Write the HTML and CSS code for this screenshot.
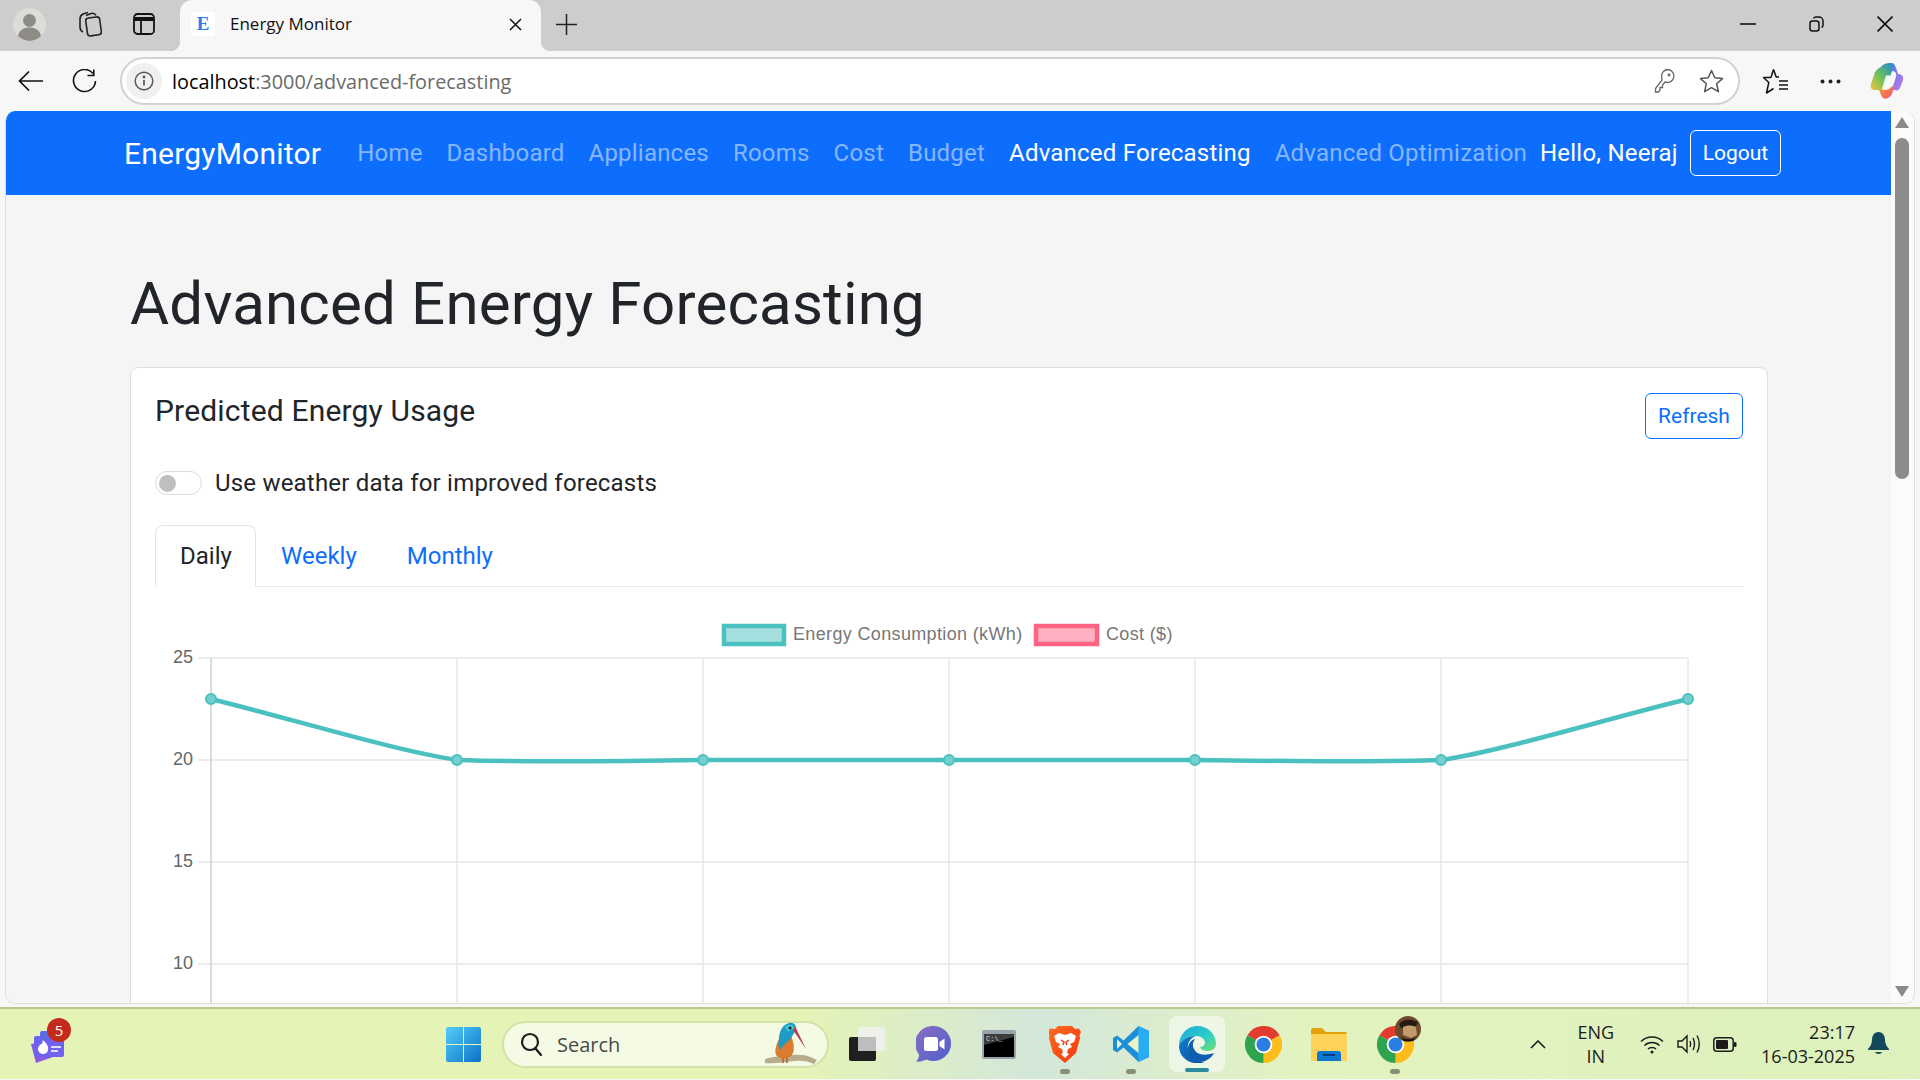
FILE: index.html
```html
<!DOCTYPE html>
<html lang="en">
<head>
<meta charset="utf-8">
<title>Energy Monitor</title>
<link rel="stylesheet" href="styles.css">
</head>
<body>
<svg class="defs" width="0" height="0" aria-hidden="true">
  <symbol id="chrome" viewBox="0 0 36 36">
    <path d="M18 18 L2.4 9 A18 18 0 0 1 33.6 9 Z" fill="#e33b2e"/>
    <path d="M18 18 L33.6 9 A18 18 0 0 1 18 36 Z" fill="#fbbc1c"/>
    <path d="M18 18 L18 36 A18 18 0 0 1 2.4 9 Z" fill="#2fa44f"/>
    <circle cx="18" cy="18" r="8.6" fill="#fff"/>
    <circle cx="18" cy="18" r="6.8" fill="#2a7de1"/>
  </symbol>
</svg>
<div class="window">
  <div class="tabstrip">
    <svg class="ic-profile" width="33" height="33" viewBox="0 0 33 33"><circle cx="16.5" cy="16.5" r="16.5" fill="#dcdcd8"/><circle cx="16.5" cy="12.5" r="6.5" fill="#8f8c88"/><path d="M5 28c1-6 6-8.500 11.500-8.500S27 22 28 28a16 16 0 0 1-23 0z" fill="#8f8c88"/></svg>
    <svg class="ic-coll" width="25" height="26" viewBox="0 0 25 26" fill="none" stroke="#222" stroke-width="1.6"><rect x="9.500" y="6.500" width="14" height="18" rx="3" transform="rotate(-8 16 15)"/><path d="M6 21c-2-1-3-3-3-5V8c0-2 1-4 3-5l5-1.500"/><path d="M9 4.500l5-2c2-.5 4 0 5 2"/></svg>
    <svg class="ic-tabs" width="22" height="22" viewBox="0 0 22 22" fill="none" stroke="#111" stroke-width="1.8"><rect x="1" y="1" width="20" height="20" rx="3.500"/><path d="M1 6h20" stroke-width="4"/><path d="M8 7v14"/></svg>
    <div class="tab">
      <span class="favicon">E</span>
      <span class="tab-title">Energy Monitor</span>
      <svg class="ic-tabclose" width="13" height="13" viewBox="0 0 13 13" stroke="#111" stroke-width="1.5"><path d="M1 1l11 11M12 1L1 12"/></svg>
    </div>
    <svg class="ic-plus" width="21" height="21" viewBox="0 0 21 21" stroke="#222" stroke-width="1.500"><path d="M10.500 0v21M0 10.500h21"/></svg>
    <div class="winctl">
      <svg width="16" height="16" viewBox="0 0 16 16" stroke="#111" stroke-width="1.600"><path d="M0 8h16"/></svg>
      <svg width="15" height="16" viewBox="0 0 15 16" fill="none" stroke="#111" stroke-width="1.500"><rect x="1" y="5" width="9" height="10" rx="2.500"/><path d="M4.500 2.500C5 1.500 6 1 7 1h3c2.200 0 4 1.800 4 4v4c0 1-.5 2-1.300 2.500"/></svg>
      <svg width="16" height="16" viewBox="0 0 16 16" stroke="#111" stroke-width="1.600"><path d="M.5.500l15 15M15.500.500l-15 15"/></svg>
    </div>
  </div>

  <div class="toolbar">
    <svg class="ic-back" width="25" height="22" viewBox="0 0 25 22" fill="none" stroke="#111" stroke-width="1.700"><path d="M25 11H1.500M11 1.500L1.500 11l9.500 9.500"/></svg>
    <svg class="ic-reload" width="25" height="25" viewBox="0 0 25 25" fill="none" stroke="#111" stroke-width="1.600"><path d="M21 4.500A11 11 0 1 0 23.500 12"/><path d="M21.800 .5v6h-6.300"/></svg>
    <div class="address">
      <span class="info"><svg width="20" height="20" viewBox="0 0 20 20" fill="none" stroke="#555" stroke-width="1.400"><circle cx="10" cy="10" r="8.800"/><path d="M10 9v5.500" stroke-width="1.700"/><circle cx="10" cy="6" r=".7"/></svg></span>
      <span class="url"><span class="url-host">localhost</span>:3000/advanced-forecasting</span>
      <svg class="ic-key" width="21" height="26" viewBox="0 0 21 26" fill="none" stroke="#666" stroke-width="1.300"><path d="M13.500 1.500a6.500 6.500 0 0 1 1 12.900c-1.200.2-2.300 0-3.300-.5L8.500 17v2.500H6V22l-1.500 2H1.500v-3.500L8.200 12c-.4-1-.7-2-.5-3.200A6.500 6.500 0 0 1 13.500 1.500z"/><circle cx="15" cy="7" r=".8" fill="#666"/></svg>
      <svg class="ic-star" width="25" height="25" viewBox="0 0 25 25" fill="none" stroke="#555" stroke-width="1.500" stroke-linejoin="round"><path d="M12.500 1.500l3.300 7.300 7.700.8-5.800 5.200 1.700 7.900-6.900-4.100-6.900 4.100 1.700-7.900L1.500 9.600l7.700-.8z"/></svg>
    </div>
    <svg class="ic-favs" width="26" height="27" viewBox="0 0 26 27" fill="none" stroke="#111" stroke-width="1.500" stroke-linejoin="round"><path d="M11.500 1.500L14.200 9H17M9 9.500H1.500l5.300 5L4.500 25l7-4.500"/><path d="M11.500 1.500L9 9.500"/><path d="M17 13h9M17 17h9M17 21h9"/></svg>
    <svg class="ic-more" width="21" height="5" viewBox="0 0 21 5" fill="#222"><circle cx="2.500" cy="2.500" r="2"/><circle cx="10.500" cy="2.500" r="2"/><circle cx="18.500" cy="2.500" r="2"/></svg>
    <svg class="ic-copilot" width="34" height="36" viewBox="0 0 34 36">
      <defs>
        <linearGradient id="cpA" x1="0" y1="1" x2="1" y2="0"><stop offset="0" stop-color="#f5c23a"/><stop offset=".45" stop-color="#6fc35a"/><stop offset="1" stop-color="#1d86d8"/></linearGradient>
        <linearGradient id="cpB" x1="0" y1="0" x2="1" y2="1"><stop offset="0" stop-color="#3f7be8"/><stop offset="1" stop-color="#c77ae8"/></linearGradient>
        <linearGradient id="cpC" x1="0" y1="0" x2="1" y2="1"><stop offset="0" stop-color="#f8a13b"/><stop offset="1" stop-color="#ee4f6e"/></linearGradient>
      </defs>
      <path d="M11 4C13 1 16 0 21 0c3 0 3 3 2 6l-7 18c-1 2-3 3-5 3H5c-4 0-5-3-4-6l3-9c1-4 3-6 7-8z" fill="url(#cpA)"/>
      <path d="M21 0c3 0 4 2 5 5l2 6c3 0 6 2 5 6l-3 8c-1 2-3 3-5 2h-7c2 0 4-2 5-4l3-9c1-4-1-6-4-6 1-4 1-7-1-8z" fill="url(#cpB)"/>
      <path d="M9 27h6c2 0 5-1 6-3l2-1c1 6-2 11-5 12-3 2-6 0-7-3z" fill="url(#cpC)"/>
      <path d="M16 12.500h5.500L17 26h-5z" fill="#fff" fill-opacity=".92"/>
    </svg>
  </div>

  <div class="viewport">
    <div class="page">
      <nav class="navbar">
        <a class="brand">EnergyMonitor</a>
        <a class="nav-link">Home</a>
        <a class="nav-link">Dashboard</a>
        <a class="nav-link">Appliances</a>
        <a class="nav-link">Rooms</a>
        <a class="nav-link">Cost</a>
        <a class="nav-link">Budget</a>
        <a class="nav-link active">Advanced Forecasting</a>
        <a class="nav-link">Advanced Optimization</a>
        <span class="hello">Hello, Neeraj</span>
        <button class="btn btn-light">Logout</button>
      </nav>
      <main class="main">
        <h1 class="title">Advanced Energy Forecasting</h1>
        <section class="card">
          <div class="card-head">
            <h2 class="card-title">Predicted Energy Usage</h2>
            <button class="btn btn-primary-outline">Refresh</button>
          </div>
          <label class="switch-row">
            <span class="switch"><span class="knob"></span></span>
            <span>Use weather data for improved forecasts</span>
          </label>
          <div class="tabs">
            <a class="tablink current">Daily</a>
            <a class="tablink">Weekly</a>
            <a class="tablink">Monthly</a>
          </div>
          <svg class="chart" width="1588" height="420" viewBox="155 587 1588 420">
            <g class="grid">
              <path d="M198 658H1688M198 760H1688M198 862H1688M198 964H1688"/>
              <path d="M457 658V1007M703 658V1007M949 658V1007M1195 658V1007M1441 658V1007M1688 658V1007"/>
            </g>
            <path class="axis" d="M211 658V1007"/>
            <g class="ticks">
              <text x="193" y="663">25</text>
              <text x="193" y="765">20</text>
              <text x="193" y="867">15</text>
              <text x="193" y="969">10</text>
            </g>
            <rect class="teal-box" x="724" y="626" width="60" height="18"/>
            <text class="legend" x="793" y="639.500">Energy Consumption (kWh)</text>
            <rect class="pink-box" x="1036" y="626" width="61" height="18"/>
            <text class="legend" x="1106" y="639.500">Cost ($)</text>
            <path class="line" d="M211 699C292 719 400 752 457 760C520 762 640 761 703 760L1195 760C1258 761 1388 762 1441 760C1498 752 1606 719 1688 699"/>
            <g class="dots">
              <circle cx="211" cy="699" r="5"/><circle cx="457" cy="760" r="5"/><circle cx="703" cy="760" r="5"/><circle cx="949" cy="760" r="5"/><circle cx="1195" cy="760" r="5"/><circle cx="1441" cy="760" r="5"/><circle cx="1688" cy="699" r="5"/>
            </g>
          </svg>
        </section>
      </main>
    </div>
    <div class="scrollbar">
      <span class="arrow-up"></span>
      <span class="thumb"></span>
      <span class="arrow-down"></span>
    </div>
  </div>

  <footer class="taskbar">
    <div class="widget">
      <svg width="36" height="34" viewBox="0 0 36 34"><path d="M1 14l22-4v17L6 33z" fill="#8a5ae0"/><rect x="4" y="6" width="30" height="21" rx="2" fill="#6f62ee"/><rect x="10" y="1" width="20" height="8" rx="2" fill="#5a6ce8"/><path d="M13 10c3 3 6 6 5 10-.5 3-3 4-5 4s-5-2-5-5c0-3 2-3 2-5 1 1 2 1 3-4z" fill="#fff"/><path d="M21 17h10M21 21h7" stroke="#e4dcff" stroke-width="2"/></svg>
      <span class="badge">5</span>
    </div>
    <div class="taskicon start">
      <svg width="35" height="35" viewBox="0 0 35 35"><defs><linearGradient id="wn" x1="0" y1="0" x2="1" y2="1"><stop offset="0" stop-color="#56cdf8"/><stop offset="1" stop-color="#0a72c9"/></linearGradient></defs><path d="M2 0h15v17H0V2a2 2 0 0 1 2-2zM18 0h15a2 2 0 0 1 2 2v15H18zM0 18h17v17H2a2 2 0 0 1-2-2zM18 18h17v15a2 2 0 0 1-2 2H18z" fill="url(#wn)"/></svg>
    </div>
    <div class="searchbox">
      <svg width="23" height="25" viewBox="0 0 23 25" fill="none" stroke="#1b1b1b" stroke-width="2.200"><circle cx="10" cy="10" r="8"/><path d="M15.500 16.500L21 23" stroke-linecap="round"/></svg>
      <span class="search-label">Search</span>
      <svg class="bird" width="56" height="46" viewBox="0 0 56 46">
        <path d="M2 38c10-3 18-3 28-4 8-1 16 0 24 5l-3 4c-6-3-12-4-20-3-10 1-20 3-29 2z" fill="#b5ad8c"/>
        <path d="M17 16c-3 6-6 12-4 18 3 4 12 5 16 0 3-5 2-12-1-19z" fill="#dc7a2f"/>
        <path d="M16 18c0-7 3-14 10-16 5-1 8 3 7 7l-5 8c-3 4-7 6-11 12-2-4-2-7-1-11z" fill="#1f9cc4"/>
        <path d="M22 6c3-3 8-3 10 1-2 1-5 2-7 4z" fill="#38c6d8"/>
        <path d="M32 5l11 23-13-19z" fill="#b0485a"/>
        <circle cx="27" cy="7" r="1.500" fill="#122"/>
        <path d="M20 37v5M24 37v5" stroke="#c2562a" stroke-width="1.500"/>
      </svg>
    </div>
    <div class="taskicon">
      <svg width="36" height="34" viewBox="0 0 36 34"><rect x="0" y="10" width="27" height="24" rx="2" fill="#1f1f1f"/><rect x="9" y="0" width="27" height="24" rx="2" fill="#f2f2f2" fill-opacity=".82"/><rect x="9" y="10" width="18" height="14" fill="#bdbdbd"/></svg>
    </div>
    <div class="taskicon">
      <svg width="35" height="36" viewBox="0 0 35 36"><defs><linearGradient id="mt" x1="0" y1="0" x2="1" y2="1"><stop offset="0" stop-color="#8a6fc2"/><stop offset="1" stop-color="#4f5fcb"/></linearGradient></defs><path d="M17.500 0a17.500 17.500 0 1 1-7 33.500C7 35 4 36 0 35.500c2-2 3-4 3-7A17.500 17.500 0 0 1 17.500 0z" fill="url(#mt)"/><rect x="8" y="11" width="14" height="14" rx="2.500" fill="#fff"/><path d="M23.500 16l5-3.500v11l-5-3.500z" fill="#fff"/></svg>
    </div>
    <div class="taskicon">
      <svg width="34" height="29" viewBox="0 0 34 29"><rect width="34" height="29" rx="2" fill="#9aa3ab"/><rect x="2" y="4" width="30" height="23" fill="#000"/><path d="M2 4h30v3L2 15z" fill="#3c3c3c"/><text class="term" x="4" y="11">C:\_</text></svg>
    </div>
    <div class="taskicon">
      <svg width="32" height="37" viewBox="0 0 32 37"><defs><linearGradient id="br" x1="0" y1="0" x2="1" y2="1"><stop offset="0" stop-color="#ff6a1f"/><stop offset="1" stop-color="#f2390f"/></linearGradient></defs><path d="M9 0h14l3 3 4-.5 2 3.500-1.500 3 .5 3-4 15L16 37 4 27 0 12l.5-3L-1 6l2-3.500L6 3z" fill="url(#br)"/><path d="M5 10l5-3 6 2 6-2 5 3-2 6-4 2 2 3-4 2-1 4h-4l-1-4-4-2 2-3-4-2z" fill="#fff"/><path d="M12 14l3 2-1 3M20 14l-3 2 1 3" fill="none" stroke="#f2390f" stroke-width="1.500"/><path d="M12 28l4-2 4 2-4 4z" fill="#fff"/></svg>
      <span class="run-dot"></span>
    </div>
    <div class="taskicon">
      <svg width="36" height="36" viewBox="0 0 36 36"><path d="M25.500 0L36 5v26l-10.500 5-15-14.500L4 26.500 0 24V12l4-2.500 6.500 5z" fill="#1d8fd8"/><path d="M25.500 0L36 5v26l-10.500 5z" fill="#28adf2"/><path d="M25.500 9L14.500 18l11 9z" fill="#e6f3c8"/><path d="M4 13l5 5-5 5z" fill="#e6f3c8"/></svg>
      <span class="run-dot"></span>
    </div>
    <div class="taskicon edge-on">
      <svg width="37" height="37" viewBox="0 0 37 37"><defs><linearGradient id="ed1" x1="0" y1="0" x2="1" y2="1"><stop offset="0" stop-color="#1aa6de"/><stop offset=".6" stop-color="#2fd0c4"/><stop offset="1" stop-color="#76e06a"/></linearGradient><linearGradient id="ed2" x1="0" y1="0" x2="1" y2="1"><stop offset="0" stop-color="#0f7fcf"/><stop offset="1" stop-color="#0b4f9c"/></linearGradient></defs><path d="M18.500 0C29 0 37 8 37 18c0 4-3 7-8 7-4 0-7-1-8-4 3 0 5-2 5-4 0-4-4-7-9-7C9 10 2 14 0 20 0 9 8 0 18.500 0z" fill="url(#ed1)"/><path d="M0 20c2-6 9-10 17-10-6 2-9 7-8 13 1 6 6 11 13 13 2 .5 3 .5 4 .5C13 40 0 33 0 20z" fill="url(#ed2)"/><path d="M17 36c-5-3-8-8-8-13 0-5 3-9 7-10-2 3-3 6-1 10 3 6 10 7 20 4-3 6-10 10-18 9z" fill="#0d60ad"/></svg>
      <span class="active-bar"></span>
    </div>
    <div class="taskicon">
      <svg width="37" height="37"><use href="#chrome"/></svg>
    </div>
    <div class="taskicon">
      <svg width="36" height="33" viewBox="0 0 36 33"><path d="M0 2a2 2 0 0 1 2-2h9l4 4h19a2 2 0 0 1 2 2v4H0z" fill="#e0a50c"/><path d="M0 6h36v27H0z" fill="#fdd35c"/><path d="M6 33v-7a3 3 0 0 1 3-3h18a3 3 0 0 1 3 3v7z" fill="#0d78d0"/><rect x="12" y="26" width="12" height="2" fill="#083c7a"/></svg>
    </div>
    <div class="taskicon">
      <span class="chrome-avatar">
        <svg width="37" height="37"><use href="#chrome"/></svg>
        <svg class="avatar" width="26" height="26" viewBox="0 0 26 26"><circle cx="13" cy="13" r="13" fill="#6b4a2c"/><path d="M4 8c4-5 14-6 19-1l-3 4-14 1z" fill="#241a12"/><path d="M8 11c4-2 9-2 13 0l1 8-6 3-8-3z" fill="#c29a6c"/><path d="M6 21c5 3 11 3 15 0l-3 4H9z" fill="#19130e"/></svg>
      </span>
      <span class="run-dot"></span>
    </div>
    <div class="tray">
      <svg class="ic-caret" width="16" height="9" viewBox="0 0 16 9" fill="none" stroke="#1c1c1c" stroke-width="1.600"><path d="M1 8l7-7 7 7"/></svg>
      <div class="lang"><span>ENG</span><span>IN</span></div>
      <svg class="ic-wifi" width="24" height="19" viewBox="0 0 24 19" fill="none" stroke="#1c1c1c" stroke-width="1.500"><path d="M1 6.500c6-6 16-6 22 0M4.500 10.500c4-4 11-4 15 0M8 14c2-2 6-2 8 0"/><circle cx="12" cy="17" r="1.500" fill="#1c1c1c" stroke="none"/></svg>
      <svg class="ic-vol" width="24" height="20" viewBox="0 0 24 20" fill="none" stroke="#1c1c1c" stroke-width="1.400"><path d="M1 7h4l5-5v16l-5-5H1z"/><path d="M13 7c1 2 1 4 0 6M16 4c2 4 2 8 0 12M20 1.500c3 5 3 12 0 17"/></svg>
      <svg class="ic-batt" width="24" height="15" viewBox="0 0 24 15"><rect x=".8" y=".8" width="19.400" height="13.400" rx="3" fill="none" stroke="#1c1c1c" stroke-width="1.500"/><rect x="3" y="3" width="12" height="9" rx="1" fill="#1c1c1c"/><rect x="21" y="5" width="2.500" height="5" rx="1" fill="#1c1c1c"/></svg>
      <div class="clock"><span>23:17</span><span>16-03-2025</span></div>
      <svg class="ic-bell" width="21" height="24" viewBox="0 0 21 24" fill="#14495c"><path d="M10.500 0C15 0 17 4 17 8c0 4 2 7 4 9v1H0v-1c2-2 4-5 4-9 0-4 2-8 6.500-8z"/><path d="M7 20h7c-.5 2.500-6.500 2.500-7 0z"/></svg>
    </div>
  </footer>
</div>
</body>
</html>
```

FILE: styles.css
```css
* { box-sizing: border-box; }
html, body { margin: 0; padding: 0; }
body { width: 1920px; height: 1080px; overflow: hidden; font-family: Roboto, "Liberation Sans", sans-serif; }
.defs { position: absolute; }
.window { display: flex; flex-direction: column; width: 1920px; height: 1080px; background: #f7f7f7; }

/* tab strip */
.tabstrip { display: flex; align-items: center; height: 51px; padding: 0 0 3px 13px; background: #cdcdcd; flex: none; }
.ic-profile { flex: none; }
.ic-coll { margin-left: 31px; }
.ic-tabs { margin-left: 31px; }
.tab { position: relative; display: flex; align-items: center; align-self: stretch; width: 361px; height: 51px; margin-left: 25px; padding: 0 19px 3px 11px; background: #f7f7f7; border-radius: 12px 12px 0 0; }
.tab::before, .tab::after { content: ""; position: absolute; bottom: 0; width: 10px; height: 10px; }
.tab::before { left: -10px; background: radial-gradient(circle at 0 0, transparent 10px, #f7f7f7 10.500px); }
.tab::after { right: -10px; background: radial-gradient(circle at 100% 0, transparent 10px, #f7f7f7 10.500px); }
.favicon { display: flex; align-items: center; justify-content: center; width: 24px; height: 24px; background: #fff; border-radius: 3px; color: #2f7be8; font: 700 19px "Liberation Serif", serif; }
.tab-title { margin-left: 15px; margin-bottom: 2px; font: 17px "Open Sans", "Noto Sans", sans-serif; color: #111; }
.ic-tabclose { margin-left: auto; }
.ic-plus { margin-left: 15px; }
.winctl { display: flex; align-items: center; margin-left: auto; padding-right: 27px; }
.winctl svg + svg { margin-left: 53px; }

/* toolbar */
.toolbar { display: flex; align-items: center; height: 60px; padding: 0 0 0 18px; background: #f7f7f7; flex: none; }
.ic-reload { margin-left: 29px; }
.address { display: flex; align-items: center; width: 1620px; height: 48px; margin-left: 23px; padding: 0 14px 0 4px; background: #fff; border: 2px solid #d2d2d2; border-radius: 24px; }
.info { display: flex; align-items: center; justify-content: center; width: 36px; height: 36px; border-radius: 50%; background: #f0f0f0; flex: none; }
.url { margin-left: 10px; font: 19.850px "Open Sans", "Noto Sans", sans-serif; color: #6a6a6a; }
.url-host { color: #000; }
.ic-key { margin-left: auto; }
.ic-star { margin-left: 24px; }
.ic-favs { margin-left: 22px; }
.ic-more { margin-left: 32px; }
.ic-copilot { margin-left: 29px; }

/* viewport */
.viewport { display: flex; height: 893px; margin: 0 5px 3px; background: #f5f5f5; border: 1px solid #dedede; border-top: 0; border-radius: 10px; overflow: hidden; flex: none; }
.page { flex: 1; min-width: 0; overflow: hidden; background: #f5f5f5; }
.scrollbar { position: relative; width: 23px; background: #fbfbfb; flex: none; }
.arrow-up, .arrow-down { position: absolute; left: 4px; width: 0; height: 0; border-left: 7.500px solid transparent; border-right: 7.500px solid transparent; }
.arrow-up { top: 6px; border-bottom: 11px solid #8a8a8a; }
.arrow-down { bottom: 6px; border-top: 11px solid #8a8a8a; }
.thumb { position: absolute; top: 27px; left: 4px; width: 14px; height: 341px; border-radius: 7px; background: #8c8c8c; }

/* navbar */
.navbar { display: flex; align-items: center; height: 84px; padding-left: 118px; background: #0d6efd; font-size: 24px; letter-spacing: .21px; }
.brand { margin-right: 24px; color: #fff; font-size: 30px; }
.nav-link { padding: 0 12px; color: rgba(255, 255, 255, .5); white-space: nowrap; }
.nav-link.active { color: #fff; }
.hello { margin-left: 1px; color: #fff; white-space: nowrap; }
.btn { height: 46px; padding: 0 12px; font: 21px Roboto, sans-serif; background: transparent; border-radius: 6px; }
.btn-light { margin-left: 12px; width: 91px; border: 1px solid #fff; color: #fff; }
.btn-primary-outline { width: 98px; border: 1px solid #0d6efd; color: #0d6efd; background: #fff; }

/* main */
.main { height: 808px; padding: 73px 123px 0 124px; overflow: hidden; color: #212529; }
.title { margin: 0 0 27px; font-size: 60px; line-height: 72px; font-weight: 400; letter-spacing: .2px; }
.card { height: 700px; padding: 25px 24px 0 24px; background: #fff; border: 1px solid #dfdfdf; border-radius: 8px; }
.card-head { display: flex; align-items: flex-start; justify-content: space-between; }
.card-title { margin: 0; font-size: 30px; line-height: 36px; font-weight: 400; letter-spacing: .17px; }
.switch-row { display: flex; align-items: center; gap: 13px; margin-top: 26px; font-size: 24px; line-height: 36px; letter-spacing: .2px; }
.switch { display: block; width: 47px; height: 24px; padding: 3px 2px; border: 1px solid #dcdcdc; border-radius: 12px; background: #fff; }
.knob { display: block; width: 17px; height: 17px; margin-left: 1px; border-radius: 50%; background: #bfbfbf; }
.tabs { display: flex; height: 62px; margin-top: 24px; border-bottom: 1px solid #e9e9e9; font-size: 24px; line-height: 36px; }
.tablink { height: 62px; padding: 12px 24px; color: #0d6efd; border: 1px solid transparent; }
.tablink.current { width: 101px; padding-left: 24px; color: #212529; background: #fff; border-color: #e4e4e4 #e4e4e4 #fff; border-radius: 8px 8px 0 0; }
.chart { display: block; }

/* chart */
.grid path { fill: none; stroke: #e8e8e8; stroke-width: 1.500; }
.axis { fill: none; stroke: #cfcfcf; stroke-width: 1.500; }
.ticks text { font: 18px "Liberation Sans", sans-serif; fill: #666; text-anchor: end; }
.legend { font: 18px "Liberation Sans", sans-serif; fill: #777; letter-spacing: .35px; }
.teal-box { fill: rgba(75, 192, 192, .5); stroke: #4bc0c0; stroke-width: 4.500; }
.pink-box { fill: rgba(255, 99, 132, .5); stroke: #ff6384; stroke-width: 4.500; }
.line { fill: none; stroke: #4bc0c0; stroke-width: 4.500; }
.dots circle { fill: #76cfcf; stroke: #4bc0c0; stroke-width: 2; }
.term { font: 7px "Liberation Mono", monospace; fill: #ddd; }

/* taskbar */
.taskbar { display: flex; align-items: center; height: 72px; border-top: 2px solid #b8c98f; background: linear-gradient(90deg, #e5f4b6 0%, #e4f3b6 42%, #d3e7da 54%, #e3f3c0 68%, #dcf1bb 100%); flex: none; }
.widget { position: relative; display: flex; width: 430px; padding: 6px 0 0 30px; }
.badge { position: absolute; left: 47px; top: -6px; display: flex; align-items: center; justify-content: center; width: 24px; height: 24px; border-radius: 50%; background: #c42b1c; color: #fff; font: 15px "Open Sans", sans-serif; }
.taskicon { position: relative; display: flex; align-items: center; justify-content: center; width: 66px; height: 56px; }
.taskicon.start { margin-right: 6px; }
.searchbox { display: flex; align-items: center; width: 327px; height: 47px; margin-right: 5px; padding: 0 8px 0 16px; background: #f5fae4; border: 2px solid #d4e2a8; border-radius: 24px; }
.search-label { margin-left: 14px; color: #4a4a4a; font: 20px "Open Sans", sans-serif; }
.bird { margin-left: auto; }
.run-dot { position: absolute; left: 28px; bottom: -2px; width: 10px; height: 5px; border-radius: 3px; background: #8a8f74; }
.edge-on::before { content: ""; position: absolute; left: 5px; top: 0; width: 56px; height: 56px; border-radius: 8px; background: rgba(255, 255, 255, .5); }
.edge-on svg { position: relative; }
.active-bar { position: absolute; left: 21px; bottom: 0; width: 24px; height: 4px; border-radius: 2px; background: #2b8a9e; }
.chrome-avatar { position: relative; display: flex; }
.avatar { position: absolute; left: 18px; top: -10px; }
.tray { display: flex; align-items: center; margin-left: auto; padding-right: 31px; color: #1c1c1c; font: 18px "Open Sans", "Noto Sans", sans-serif; }
.lang, .clock { display: flex; flex-direction: column; line-height: 24px; }
.lang { align-items: center; margin-left: 31px; }
.ic-wifi { margin-left: 26px; }
.ic-vol { margin-left: 13px; }
.ic-batt { margin-left: 12px; }
.clock { align-items: flex-end; margin-left: 24px; }
.ic-bell { margin-left: 13px; }
```
